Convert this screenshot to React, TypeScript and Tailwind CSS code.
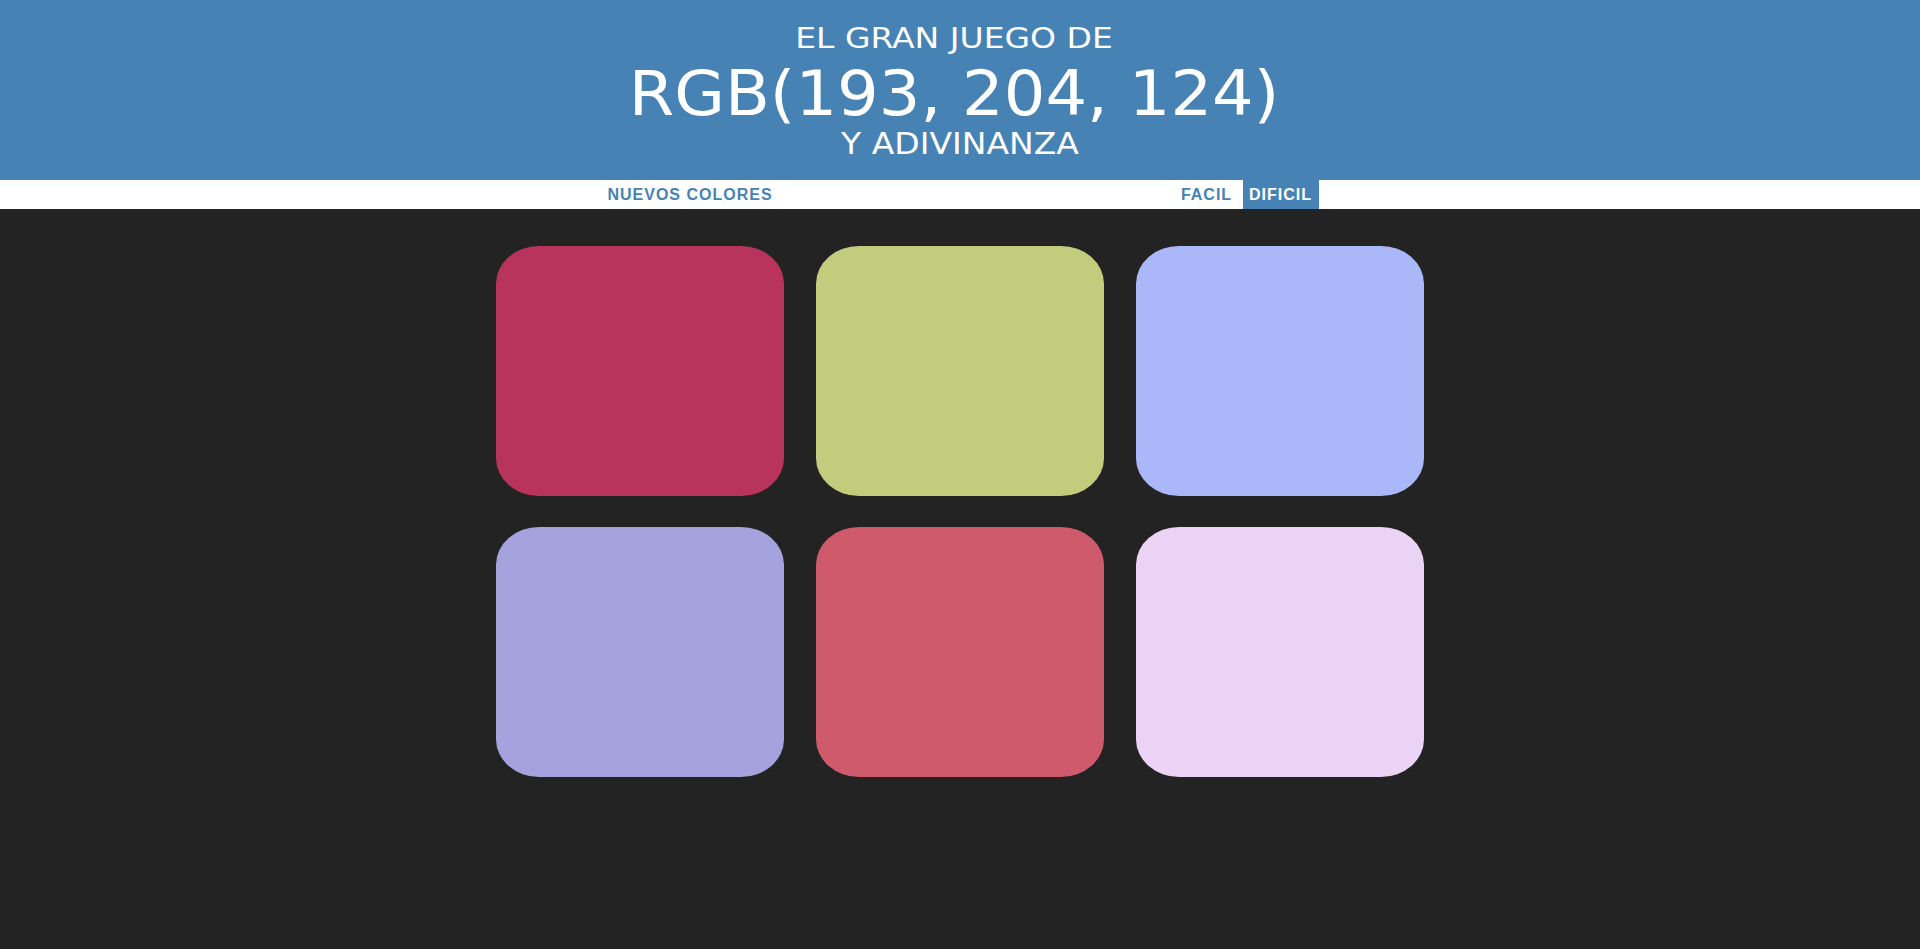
const squares = ["#b8335e", "#c1cc7c", "#aab8f9", "#a6a2de", "#cf5a6c", "#ead3f5"]

export default function App() {
  return (
    <div className="min-h-screen bg-[#232323]">
      {/* title */}
      <h1 className="h-[180px] bg-[#4682b4] pt-[20px] text-center font-normal uppercase text-white [font-family:'DejaVu_Sans',Verdana,sans-serif]">
        <div className="scale-y-[0.88] pr-[12px] text-[33px] leading-[36px]">El Gran Juego de</div>
        <div className="scale-y-[0.96] pr-[12px] text-[65.5px] leading-[74px]">RGB(193, 204, 124)</div>
        <div className="scale-y-[0.9] text-[33px] leading-[28px]">y Adivinanza</div>
      </h1>

      {/* stripe */}
      <div className="flex h-[29px] justify-center bg-white text-[16px] font-bold tracking-[1px] [font-family:'Liberation_Sans',Arial,sans-serif]">
        <button className="w-[177px] uppercase text-[#4682b4]">Nuevos Colores</button>
        <span className="w-[395px]"></span>
        <button className="w-[66px] uppercase text-[#4682b4]">Facil</button>
        <span className="w-[3px]"></span>
        <button className="w-[76px] bg-[#4682b4] uppercase text-white">Dificil</button>
      </div>

      {/* squares */}
      <div className="mx-auto grid w-[928px] grid-cols-3 gap-x-[32px] gap-y-[31px] pt-[37px]">
        {squares.map((c) => (
          <div key={c} className="h-[250px] w-[288px] rounded-[15%]" style={{ backgroundColor: c }} />
        ))}
      </div>
    </div>
  )
}
